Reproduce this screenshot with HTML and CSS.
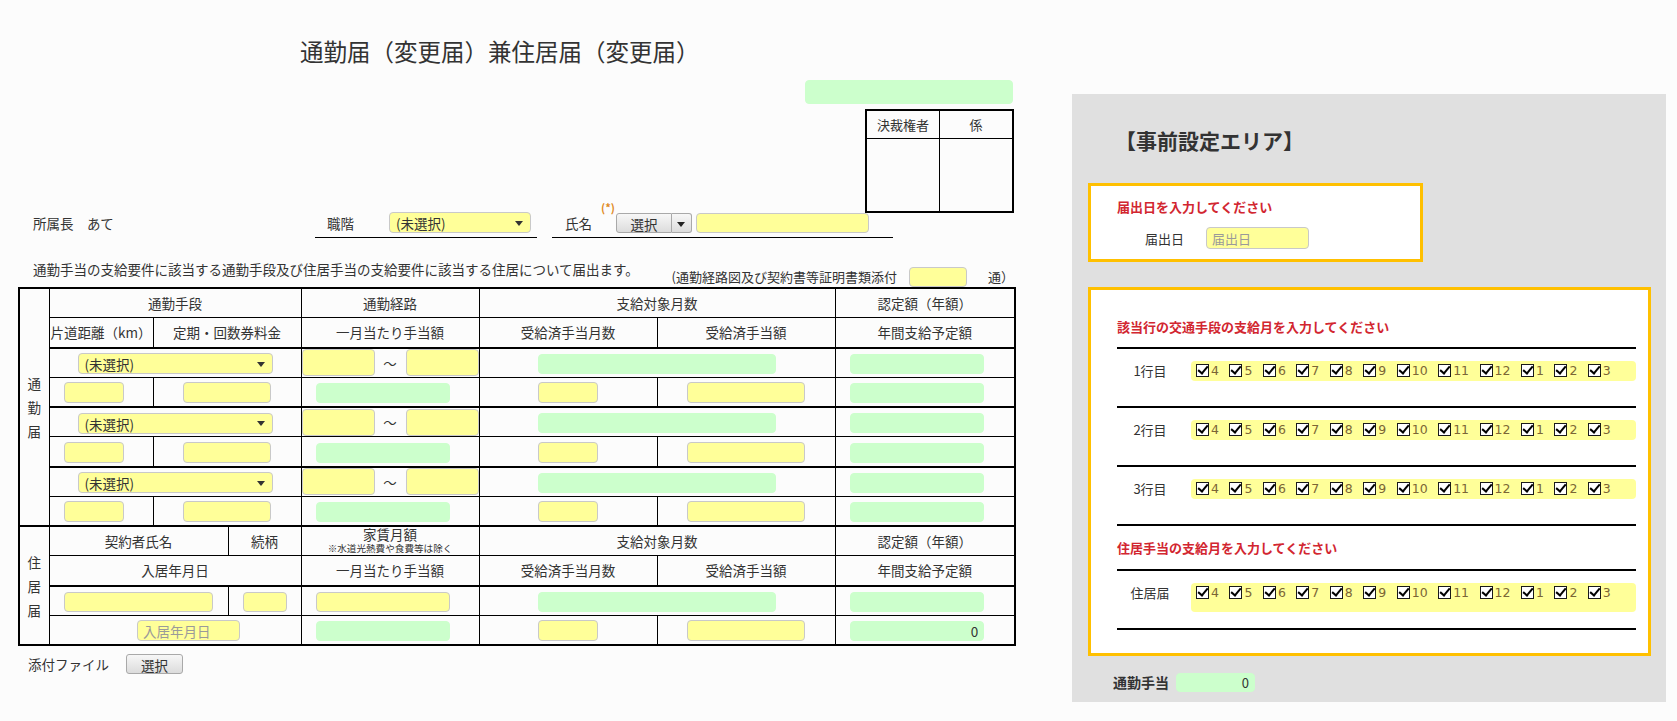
FILE: index.html
```html
<!DOCTYPE html>
<html lang="ja">
<head>
    <meta charset="UTF-8">
    <meta name="viewport" content="width=device-width, initial-scale=1.0">
    <title>通勤届（変更届）兼住居届（変更届）</title>
    <link rel="stylesheet" href="styles.css">
</head>
<body>
<div class="page">
    <!-- 申請フォーム -->
    <main class="form">
        <h1 class="title">通勤届（変更届）兼住居届（変更届）</h1>

        <div class="stamp">
            <input type="text" class="fld green doc-no" readonly>
            <table class="approval">
                <tr><th class="ap-1">決裁権者</th><th>係</th></tr>
                <tr><td></td><td></td></tr>
            </table>
        </div>

        <!-- 宛先・職階・氏名 -->
        <div class="addr-row">
            <div class="addressee">所属長　あて</div>
            <div class="field rank">
                <label>職階</label>
                <span class="sel"><select class="fld yellow rank-sel"><option>(未選択)</option></select></span>
            </div>
            <div class="field person">
                <label>氏名</label>
                <span class="req">(*)</span>
                <span class="pick"><button type="button" class="btn main">選択</button><button type="button" class="btn drop"></button></span>
                <input type="text" class="fld yellow name-in">
            </div>
        </div>

        <div class="notice-row">
            <p>通勤手当の支給要件に該当する通勤手段及び住居手当の支給要件に該当する住居について届出ます。</p>
            <div class="attach">(通勤経路図及び契約書等証明書類添付<input type="text" class="fld yellow cnt">通）</div>
        </div>

        <table class="grid">
            <colgroup>
                <col class="c-lbl"><col class="c-a"><col class="c-a2"><col class="c-b2">
                <col class="c-c"><col class="c-d"><col class="c-e"><col class="c-f">
            </colgroup>
            <!-- 通勤届 -->
            <tr>
                <th class="vlbl" rowspan="8">通<br>勤<br>届</th>
                <th colspan="3">通勤手段</th>
                <th>通勤経路</th>
                <th colspan="2">支給対象月数</th>
                <th>認定額（年額）</th>
            </tr>
            <tr>
                <th>片道距離（km）</th>
                <th colspan="2">定期・回数券料金</th>
                <th>一月当たり手当額</th>
                <th>受給済手当月数</th>
                <th>受給済手当額</th>
                <th>年間支給予定額</th>
            </tr>

            <tr class="sep">
                <td colspan="3"><span class="sel"><select class="fld yellow route-sel"><option>(未選択)</option></select></span></td>
                <td class="range"><div><input type="text" class="fld yellow"><span>～</span><input type="text" class="fld yellow"></div></td>
                <td colspan="2"><input type="text" class="fld green span2" readonly></td>
                <td><input type="text" class="fld green amt shl" readonly></td>
            </tr>
            <tr>
                <td><input type="text" class="fld yellow sm shl"></td>
                <td colspan="2"><input type="text" class="fld yellow md"></td>
                <td><input type="text" class="fld green amt shl" readonly></td>
                <td><input type="text" class="fld yellow sm"></td>
                <td><input type="text" class="fld yellow lg"></td>
                <td><input type="text" class="fld green amt shl" readonly></td>
            </tr>

            <tr class="sep">
                <td colspan="3"><span class="sel"><select class="fld yellow route-sel"><option>(未選択)</option></select></span></td>
                <td class="range"><div><input type="text" class="fld yellow"><span>～</span><input type="text" class="fld yellow"></div></td>
                <td colspan="2"><input type="text" class="fld green span2" readonly></td>
                <td><input type="text" class="fld green amt shl" readonly></td>
            </tr>
            <tr>
                <td><input type="text" class="fld yellow sm shl"></td>
                <td colspan="2"><input type="text" class="fld yellow md"></td>
                <td><input type="text" class="fld green amt shl" readonly></td>
                <td><input type="text" class="fld yellow sm"></td>
                <td><input type="text" class="fld yellow lg"></td>
                <td><input type="text" class="fld green amt shl" readonly></td>
            </tr>

            <tr class="sep">
                <td colspan="3"><span class="sel"><select class="fld yellow route-sel"><option>(未選択)</option></select></span></td>
                <td class="range"><div><input type="text" class="fld yellow"><span>～</span><input type="text" class="fld yellow"></div></td>
                <td colspan="2"><input type="text" class="fld green span2" readonly></td>
                <td><input type="text" class="fld green amt shl" readonly></td>
            </tr>
            <tr>
                <td><input type="text" class="fld yellow sm shl"></td>
                <td colspan="2"><input type="text" class="fld yellow md"></td>
                <td><input type="text" class="fld green amt shl" readonly></td>
                <td><input type="text" class="fld yellow sm"></td>
                <td><input type="text" class="fld yellow lg"></td>
                <td><input type="text" class="fld green amt shl" readonly></td>
            </tr>

            <!-- 住居届 -->
            <tr class="sep">
                <th class="vlbl" rowspan="4">住<br>居<br>届</th>
                <th colspan="2">契約者氏名</th>
                <th>続柄</th>
                <th class="rent"><span>家賃月額</span><small>※水道光熱費や食費等は除く</small></th>
                <th colspan="2">支給対象月数</th>
                <th>認定額（年額）</th>
            </tr>
            <tr>
                <th colspan="3">入居年月日</th>
                <th>一月当たり手当額</th>
                <th>受給済手当月数</th>
                <th>受給済手当額</th>
                <th>年間支給予定額</th>
            </tr>
            <tr class="sep">
                <td colspan="2"><input type="text" class="fld yellow xl"></td>
                <td><input type="text" class="fld yellow xs"></td>
                <td><input type="text" class="fld yellow amt shl"></td>
                <td colspan="2"><input type="text" class="fld green span2" readonly></td>
                <td><input type="text" class="fld green amt shl" readonly></td>
            </tr>
            <tr>
                <td colspan="3"><input type="text" class="fld yellow move-in" placeholder="入居年月日"></td>
                <td><input type="text" class="fld green amt shl" readonly></td>
                <td><input type="text" class="fld yellow sm"></td>
                <td><input type="text" class="fld yellow lg"></td>
                <td><input type="text" class="fld green amt shl num" value="0" readonly></td>
            </tr>
        </table>

        <div class="file-row">
            <label>添付ファイル</label>
            <button type="button" class="btn file-btn">選択</button>
        </div>
    </main>

    <!-- 事前設定エリア -->
    <aside class="preset">
        <h2>【事前設定エリア】</h2>

        <section class="box date-box">
            <p class="note">届出日を入力してください</p>
            <div class="date-row">
                <label>届出日</label>
                <input type="text" class="fld yellow" placeholder="届出日">
            </div>
        </section>

        <section class="box month-box">
            <p class="note">該当行の交通手段の支給月を入力してください</p>
            <div class="mlist">
                <div class="mrow">
                    <span class="mlbl">1行目</span>
                    <div class="months">
                        <label class="mon"><input type="checkbox" checked><span>4</span></label>
                        <label class="mon"><input type="checkbox" checked><span>5</span></label>
                        <label class="mon"><input type="checkbox" checked><span>6</span></label>
                        <label class="mon"><input type="checkbox" checked><span>7</span></label>
                        <label class="mon"><input type="checkbox" checked><span>8</span></label>
                        <label class="mon"><input type="checkbox" checked><span>9</span></label>
                        <label class="mon"><input type="checkbox" checked><span>10</span></label>
                        <label class="mon"><input type="checkbox" checked><span>11</span></label>
                        <label class="mon"><input type="checkbox" checked><span>12</span></label>
                        <label class="mon"><input type="checkbox" checked><span>1</span></label>
                        <label class="mon"><input type="checkbox" checked><span>2</span></label>
                        <label class="mon"><input type="checkbox" checked><span>3</span></label>
                    </div>
                </div>
                <div class="mrow">
                    <span class="mlbl">2行目</span>
                    <div class="months">
                        <label class="mon"><input type="checkbox" checked><span>4</span></label>
                        <label class="mon"><input type="checkbox" checked><span>5</span></label>
                        <label class="mon"><input type="checkbox" checked><span>6</span></label>
                        <label class="mon"><input type="checkbox" checked><span>7</span></label>
                        <label class="mon"><input type="checkbox" checked><span>8</span></label>
                        <label class="mon"><input type="checkbox" checked><span>9</span></label>
                        <label class="mon"><input type="checkbox" checked><span>10</span></label>
                        <label class="mon"><input type="checkbox" checked><span>11</span></label>
                        <label class="mon"><input type="checkbox" checked><span>12</span></label>
                        <label class="mon"><input type="checkbox" checked><span>1</span></label>
                        <label class="mon"><input type="checkbox" checked><span>2</span></label>
                        <label class="mon"><input type="checkbox" checked><span>3</span></label>
                    </div>
                </div>
                <div class="mrow">
                    <span class="mlbl">3行目</span>
                    <div class="months">
                        <label class="mon"><input type="checkbox" checked><span>4</span></label>
                        <label class="mon"><input type="checkbox" checked><span>5</span></label>
                        <label class="mon"><input type="checkbox" checked><span>6</span></label>
                        <label class="mon"><input type="checkbox" checked><span>7</span></label>
                        <label class="mon"><input type="checkbox" checked><span>8</span></label>
                        <label class="mon"><input type="checkbox" checked><span>9</span></label>
                        <label class="mon"><input type="checkbox" checked><span>10</span></label>
                        <label class="mon"><input type="checkbox" checked><span>11</span></label>
                        <label class="mon"><input type="checkbox" checked><span>12</span></label>
                        <label class="mon"><input type="checkbox" checked><span>1</span></label>
                        <label class="mon"><input type="checkbox" checked><span>2</span></label>
                        <label class="mon"><input type="checkbox" checked><span>3</span></label>
                    </div>
                </div>
            </div>

            <p class="note note-2">住居手当の支給月を入力してください</p>
            <div class="mlist">
                <div class="mrow">
                    <span class="mlbl">住居届</span>
                    <div class="months tall">
                        <label class="mon"><input type="checkbox" checked><span>4</span></label>
                        <label class="mon"><input type="checkbox" checked><span>5</span></label>
                        <label class="mon"><input type="checkbox" checked><span>6</span></label>
                        <label class="mon"><input type="checkbox" checked><span>7</span></label>
                        <label class="mon"><input type="checkbox" checked><span>8</span></label>
                        <label class="mon"><input type="checkbox" checked><span>9</span></label>
                        <label class="mon"><input type="checkbox" checked><span>10</span></label>
                        <label class="mon"><input type="checkbox" checked><span>11</span></label>
                        <label class="mon"><input type="checkbox" checked><span>12</span></label>
                        <label class="mon"><input type="checkbox" checked><span>1</span></label>
                        <label class="mon"><input type="checkbox" checked><span>2</span></label>
                        <label class="mon"><input type="checkbox" checked><span>3</span></label>
                    </div>
                </div>
            </div>
        </section>

        <div class="total-row">
            <label>通勤手当</label>
            <input type="text" class="fld green num" value="0" readonly>
        </div>
    </aside>
</div>
</body>
</html>
```

FILE: styles.css
```css
/* Base */
body {
    margin: 0;
    background-color: #fcfcfc;
    color: #333;
    font-family: "Noto Sans CJK JP", "Noto Sans", sans-serif;
    font-size: 13.5px;
}

.page {
    display: flex;
    align-items: flex-start;
}

/* Inputs shared by the whole form */
.fld {
    box-sizing: border-box;
    font: inherit;
    color: #333;
    border-radius: 4px;
    padding: 0 5px;
    vertical-align: middle;
    outline: none;
}

.yellow {
    background-color: #ffff99;
    border: 1px solid #c9c9c9;
}

.green {
    background-color: #ccffcc;
    border: 1px solid #ccffcc;
}

.fld::placeholder {
    color: #9a9a9a;
}

.num {
    text-align: right;
}

.btn {
    font: inherit;
    color: #333;
    padding: 0;
    border: 1px solid #a9a9a9;
    background: linear-gradient(#f7f7f7, #dcdcdc);
    cursor: pointer;
}

/* Dropdowns: native select with a drawn arrow */
.sel {
    position: relative;
    display: inline-block;
    vertical-align: middle;
}

.sel select {
    appearance: none;
    -webkit-appearance: none;
    display: block;
    padding-left: 6px;
}

.sel::after {
    content: "";
    position: absolute;
    right: 8px;
    top: 50%;
    margin-top: -2px;
    border-left: 4px solid transparent;
    border-right: 4px solid transparent;
    border-top: 5px solid #333;
}

/* ---------- Left: the form ---------- */
.form {
    width: 996px;
    margin-left: 18px;
}

.title {
    margin: 36px 0 0 282px;
    font-size: 23.5px;
    font-weight: normal;
    line-height: 31px;
}

.stamp {
    display: flex;
    flex-direction: column;
    align-items: flex-end;
}

.doc-no {
    width: 208px;
    height: 24px;
    margin: 13px 1px 0 0;
}

.approval {
    margin-top: 5px;
    width: 149px;
    border-collapse: collapse;
    border: 2px solid #000;
    table-layout: fixed;
}

.approval th,
.approval td {
    border: 1px solid #000;
    padding: 0;
    font-weight: normal;
    font-size: 13px;
}

.approval th {
    height: 27px;
}

.approval .ap-1 {
    width: 72px;
}

.approval td {
    height: 72px;
}

.addr-row {
    display: flex;
    align-items: flex-end;
    margin-top: -1px;
}

.addressee {
    width: 297px;
    padding: 0 0 5px 15px;
    line-height: 20px;
    box-sizing: border-box;
}

.field {
    position: relative;
    display: flex;
    align-items: center;
    box-sizing: border-box;
    padding-bottom: 4px;
    border-bottom: 1px solid #000;
}

.rank {
    width: 222px;
    padding-left: 12px;
}

.rank label {
    width: 62px;
}

.rank-sel {
    width: 142px;
    height: 21px;
}

.person {
    width: 341px;
    margin-left: 15px;
    padding-left: 13px;
}

.person label {
    width: 51px;
}

.req {
    position: absolute;
    left: 49px;
    top: -14px;
    font-size: 11px;
    font-weight: bold;
    color: #e08a1e;
}

.pick {
    display: flex;
    margin-right: 4px;
}

.pick .main {
    width: 56px;
    height: 20px;
    border-radius: 3px 0 0 3px;
}

.pick .drop {
    position: relative;
    width: 20px;
    height: 20px;
    border-left: 0;
    border-radius: 0 3px 3px 0;
}

.pick .drop::after {
    content: "";
    position: absolute;
    left: 5px;
    top: 8px;
    border-left: 4px solid transparent;
    border-right: 4px solid transparent;
    border-top: 5px solid #222;
}

.name-in {
    width: 173px;
    height: 20px;
}

.notice-row {
    display: flex;
    justify-content: space-between;
    align-items: flex-end;
    height: 49px;
}

.notice-row p {
    margin: 0 0 8px 15px;
    line-height: 20px;
}

.attach {
    display: flex;
    align-items: center;
    font-size: 13px;
    line-height: 20px;
}

.cnt {
    width: 58px;
    height: 20px;
    margin: 0 21px 0 12px;
}

/* Main grid */
.grid {
    width: 996px;
    border-collapse: collapse;
    table-layout: fixed;
    border: 2px solid #000;
}

.c-lbl { width: 30px; }
.c-a { width: 104px; }
.c-a2 { width: 75px; }
.c-b2 { width: 73px; }
.c-c { width: 178px; }
.c-d { width: 178px; }
.c-e { width: 178px; }
.c-f { width: 180px; }

.grid tr {
    height: 29.75px;
}

.grid th,
.grid td {
    border: 1px solid #000;
    padding: 0;
    text-align: center;
    vertical-align: middle;
    font-weight: normal;
}

.grid tr.sep > * {
    border-top: 2px solid #000;
}

.grid .vlbl {
    line-height: 24px;
}

.rent {
    line-height: 14px;
}

.rent span {
    display: block;
    margin-top: -2px;
}

.rent small {
    display: block;
    font-size: 9.6px;
    line-height: 10px;
    margin-top: 2px;
}

.range div {
    display: flex;
    justify-content: space-between;
    align-items: center;
}

.range input {
    width: 73px;
    height: 27px;
}

.route-sel {
    width: 195px;
    height: 21px;
}

.sm { width: 60px; height: 21px; }
.md { width: 88px; height: 21px; }
.lg { width: 118px; height: 21px; }
.xl { width: 149px; height: 20px; }
.xs { width: 44px; height: 20px; }
.amt { width: 134px; height: 20px; }
.span2 { width: 238px; height: 20px; }

.shl {
    margin-right: 15px;
}

.move-in {
    width: 103px;
    height: 21px;
    margin-left: 27px;
}

.file-row {
    display: flex;
    align-items: center;
    margin-top: 8px;
    padding-left: 10px;
}

.file-row label {
    width: 98px;
}

.file-btn {
    width: 57px;
    height: 20px;
    border-radius: 3px;
}

/* ---------- Right: preset area ---------- */
.preset {
    width: 594px;
    height: 608px;
    margin: 94px 0 0 58px;
    padding-top: 32px;
    box-sizing: border-box;
    background-color: #e0e0e0;
}

.preset h2 {
    margin: 0 0 29px 43px;
    font-size: 21px;
    line-height: 28px;
    font-weight: bold;
    color: #333;
}

.box {
    background-color: #fff;
    border: 3px solid #ffc000;
    margin: 0 15px 0 16px;
}

.note {
    margin: 0;
    color: #d22630;
    font-weight: bold;
    font-size: 13px;
    line-height: 18px;
}

.date-box {
    width: 335px;
    box-sizing: border-box;
    padding: 12px 0 10px 26px;
    margin-bottom: 25px;
}

.date-row {
    display: flex;
    align-items: center;
    margin-top: 11px;
    padding-left: 28px;
    font-size: 13px;
}

.date-row label {
    width: 61px;
}

.date-row input {
    width: 103px;
    height: 22px;
    font-size: 13px;
}

.month-box {
    padding: 28px 12px 23px 26px;
}

.month-box .note {
    margin-bottom: 11px;
}

.month-box .note-2 {
    margin: 13px 0 12px;
}

.mlist {
    border-top: 2px solid #000;
}

.mrow {
    display: flex;
    align-items: flex-start;
    padding: 12px 0 25px;
    border-bottom: 2px solid #000;
}

.months.tall {
    height: 29px;
}

.mlist:last-child .mrow {
    padding-bottom: 16px;
}

.mlbl {
    width: 66px;
    margin-right: 8px;
    text-align: center;
    font-size: 13px;
    line-height: 20px;
}

.months {
    flex: 1;
    display: flex;
    align-items: flex-start;
    height: 20px;
    box-sizing: border-box;
    padding: 3px 0 0 5px;
    border-radius: 4px;
    background-color: #ffff99;
}

.mon {
    display: flex;
    align-items: flex-start;
    margin-right: 10.5px;
    color: #7b6535;
    font-family: "DejaVu Sans", sans-serif;
    font-size: 12.5px;
    line-height: 13px;
}

.mon input {
    appearance: none;
    -webkit-appearance: none;
    position: relative;
    width: 13px;
    height: 13px;
    margin: 0 2px 0 0;
    border: 1px solid #1a1a1a;
    background-color: #fff;
}

.mon input:checked::after {
    content: "";
    position: absolute;
    left: 3px;
    top: -1px;
    width: 4px;
    height: 8px;
    border: solid #000;
    border-width: 0 2px 2px 0;
    transform: rotate(40deg);
}

.total-row {
    display: flex;
    align-items: center;
    margin: 16px 0 0 41px;
}

.total-row label {
    width: 63px;
    font-weight: bold;
    font-size: 14px;
}

.total-row input {
    width: 79px;
    height: 19px;
    font-size: 13px;
}
```
